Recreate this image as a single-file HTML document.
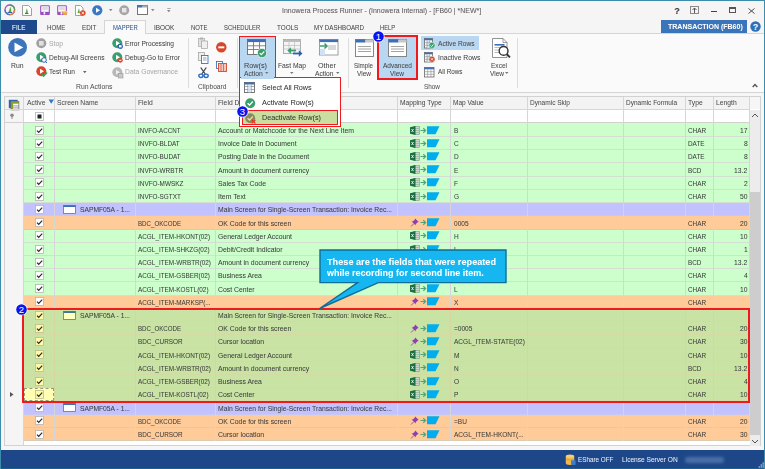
<!DOCTYPE html>
<html><head><meta charset="utf-8"><style>
html,body{margin:0;padding:0;}
body{width:765px;height:469px;overflow:hidden;position:relative;background:#f5f5f5;font-family:'Liberation Sans', sans-serif;}
div{position:absolute;box-sizing:border-box;}
.t{position:absolute;white-space:pre;line-height:10px;height:10px;transform-origin:0 50%;-webkit-text-stroke:0.04px currentColor;}
svg{overflow:visible}
</style></head><body>
<div style="left:0px;top:0px;width:765px;height:20px;background:#f5f5f5"></div><span class="t" style="left:282.00px;top:5.50px;font-size:8px;color:#555;transform:scaleX(0.870);">Innowera Process Runner - (Innowera Internal) - [FB60 | *NEW*]</span><span class="t" style="left:674.15px;top:5.52px;font-size:9px;color:#333;font-weight:bold;">?</span><div style="left:690px;top:6px;width:9px;height:8px;border:1px solid #8a8a8a"></div><svg style="position:absolute;left:690px;top:6px" width="9" height="8" viewBox="0 0 9 8"><path d="M4.5 2 L2.5 4 M4.5 2 L6.5 4 M4.5 2 V7" stroke="#555" stroke-width="1" fill="none"/></svg><div style="left:711px;top:10.6px;width:5.6px;height:1px;background:#444"></div><div style="left:729.3px;top:7px;width:6.8px;height:6px;border:1px solid #555;border-top-width:2px"></div><svg style="position:absolute;left:748px;top:8px" width="7" height="6" viewBox="0 0 7 6"><path d="M0.5 0.5 L6.5 5.5 M6.5 0.5 L0.5 5.5" stroke="#444" stroke-width="0.95"/></svg><div style="left:1px;top:33px;width:763px;height:1px;background:#d5d5d5"></div><div style="left:1px;top:20px;width:36px;height:14px;background:#1e4a8c"></div><span class="t" style="left:11.75px;top:22.50px;font-size:8px;color:#fff;transform:scaleX(0.799);">FILE</span><div style="left:104px;top:20px;width:42px;height:14px;background:#fafafa;border:1px solid #d5d5d5;border-bottom:none"></div><span class="t" style="left:46.70px;top:22.90px;font-size:8px;color:#444;transform:scaleX(0.762);">HOME</span><span class="t" style="left:81.60px;top:22.90px;font-size:8px;color:#444;transform:scaleX(0.790);">EDIT</span><span class="t" style="left:112.70px;top:22.90px;font-size:8px;color:#2b5797;transform:scaleX(0.731);">MAPPER</span><span class="t" style="left:154.00px;top:22.90px;font-size:8px;color:#444;transform:scaleX(0.805);">IBOOK</span><span class="t" style="left:191.00px;top:22.90px;font-size:8px;color:#444;transform:scaleX(0.738);">NOTE</span><span class="t" style="left:224.00px;top:22.90px;font-size:8px;color:#444;transform:scaleX(0.734);">SCHEDULER</span><span class="t" style="left:276.70px;top:22.90px;font-size:8px;color:#444;transform:scaleX(0.789);">TOOLS</span><span class="t" style="left:313.70px;top:22.90px;font-size:8px;color:#444;transform:scaleX(0.772);">MY DASHBOARD</span><span class="t" style="left:380.20px;top:22.90px;font-size:8px;color:#444;transform:scaleX(0.717);">HELP</span><div style="left:661px;top:20px;width:86px;height:13px;background:#3a74ba"></div><span class="t" style="left:668.20px;top:22.00px;font-size:8px;color:#fff;font-weight:bold;transform:scaleX(0.876);">TRANSACTION (FB60)</span><svg style="position:absolute;left:750px;top:21px" width="11" height="11" viewBox="0 0 11 11"><circle cx="5.5" cy="5.5" r="5.2" fill="#2e6fb7"/><text x="5.5" y="9" font-family="Liberation Sans" font-weight="bold" font-size="9" fill="#fff" text-anchor="middle">?</text></svg><div style="left:1px;top:34px;width:763px;height:58px;background:#fafafa"></div><div style="left:1px;top:92px;width:763px;height:1px;background:#d5d5d5"></div><div style="left:1px;top:93px;width:763px;height:357px;background:#f6f6f6"></div><div style="left:0px;top:450px;width:765px;height:19px;background:#1d4788"></div><div style="left:0px;top:468px;width:765px;height:1px;background:#1f5f8f"></div><div style="left:0px;top:0px;width:765px;height:1px;background:#3d8ca9"></div><div style="left:0px;top:0px;width:1px;height:469px;background:#3d8ca9"></div><div style="left:764px;top:0px;width:1px;height:469px;background:#3d8ca9"></div><div style="left:4px;top:96px;width:757px;height:350px;background:#fff;border:1px solid #d2d2d2"></div><div style="left:5px;top:97px;width:744px;height:12px;background:#f3f3f3"></div><div style="left:5px;top:109px;width:744px;height:1px;background:#d6d6d6"></div><div style="left:5px;top:110px;width:744px;height:12px;background:#fff"></div><div style="left:5px;top:122px;width:744px;height:1.3px;background:#d0d0d0"></div><div style="left:5px;top:97px;width:18px;height:348px;background:#f5f5f5"></div><div style="left:5px;top:97px;width:18px;height:12px;background:#f3f3f3"></div><div style="left:24px;top:123.3px;width:725px;height:13.235px;background:#ccffcc"></div><svg style="position:absolute;left:35px;top:125.6075px" width="9" height="9" viewBox="0 0 9 9"><rect x="0.5" y="0.5" width="8" height="8" fill="#fff" stroke="#b5b5b5" stroke-width="0.8"/><path d="M2 4.6 L3.7 6.4 L7.2 2.6" stroke="#2a2a2a" stroke-width="1.2" fill="none"/></svg><span class="t" style="left:138.20px;top:126.01px;font-size:8px;color:#3c3c3c;transform:scaleX(0.776);">INVFO-ACCNT</span><span class="t" style="left:218.20px;top:126.01px;font-size:8px;color:#3c3c3c;transform:scaleX(0.859);">Account or Matchcode for the Next Line Item</span><svg style="position:absolute;left:409.5px;top:125.6075px" width="31" height="9" viewBox="0 0 31 9">
<rect x="4" y="0.5" width="5.5" height="8" fill="#cfd8cf" stroke="#6d9a7a" stroke-width="0.6"/>
<path d="M5 2.5h4M5 4.5h4M5 6.5h4" stroke="#8ab596" stroke-width="0.7"/>
<path d="M0 1.2 L5.5 0 V9 L0 7.8 Z" fill="#1d7044"/>
<path d="M1.5 3 L3.5 6 M3.5 3 L1.5 6" stroke="#fff" stroke-width="0.8"/>
<path d="M10.5 4.5 H15.5 M13.3 2.3 L15.6 4.5 L13.3 6.7" stroke="#4aa57a" stroke-width="1.2" fill="none"/>
<path d="M17 0.3 H29.5 L25.5 8.3 H17 Z" fill="#00adef"/></svg><span class="t" style="left:453.50px;top:126.01px;font-size:8px;color:#3c3c3c;transform:scaleX(0.816);">B</span><span class="t" style="left:688.40px;top:126.01px;font-size:8px;color:#3c3c3c;transform:scaleX(0.797);">CHAR</span><span class="t" style="left:739.79px;top:126.01px;font-size:8px;color:#3c3c3c;transform:scaleX(0.844);">17</span><div style="left:24px;top:136.51px;width:725px;height:13.235px;background:#ccffcc"></div><svg style="position:absolute;left:35px;top:138.82249999999996px" width="9" height="9" viewBox="0 0 9 9"><rect x="0.5" y="0.5" width="8" height="8" fill="#fff" stroke="#b5b5b5" stroke-width="0.8"/><path d="M2 4.6 L3.7 6.4 L7.2 2.6" stroke="#2a2a2a" stroke-width="1.2" fill="none"/></svg><span class="t" style="left:138.20px;top:139.22px;font-size:8px;color:#3c3c3c;transform:scaleX(0.797);">INVFO-BLDAT</span><span class="t" style="left:218.20px;top:139.22px;font-size:8px;color:#3c3c3c;transform:scaleX(0.858);">Invoice Date in Document</span><svg style="position:absolute;left:409.5px;top:138.82249999999996px" width="31" height="9" viewBox="0 0 31 9">
<rect x="4" y="0.5" width="5.5" height="8" fill="#cfd8cf" stroke="#6d9a7a" stroke-width="0.6"/>
<path d="M5 2.5h4M5 4.5h4M5 6.5h4" stroke="#8ab596" stroke-width="0.7"/>
<path d="M0 1.2 L5.5 0 V9 L0 7.8 Z" fill="#1d7044"/>
<path d="M1.5 3 L3.5 6 M3.5 3 L1.5 6" stroke="#fff" stroke-width="0.8"/>
<path d="M10.5 4.5 H15.5 M13.3 2.3 L15.6 4.5 L13.3 6.7" stroke="#4aa57a" stroke-width="1.2" fill="none"/>
<path d="M17 0.3 H29.5 L25.5 8.3 H17 Z" fill="#00adef"/></svg><span class="t" style="left:453.50px;top:139.22px;font-size:8px;color:#3c3c3c;transform:scaleX(0.816);">C</span><span class="t" style="left:688.40px;top:139.22px;font-size:8px;color:#3c3c3c;transform:scaleX(0.797);">DATE</span><span class="t" style="left:743.54px;top:139.22px;font-size:8px;color:#3c3c3c;transform:scaleX(0.844);">8</span><div style="left:24px;top:149.73px;width:725px;height:13.235px;background:#ccffcc"></div><svg style="position:absolute;left:35px;top:152.03749999999997px" width="9" height="9" viewBox="0 0 9 9"><rect x="0.5" y="0.5" width="8" height="8" fill="#fff" stroke="#b5b5b5" stroke-width="0.8"/><path d="M2 4.6 L3.7 6.4 L7.2 2.6" stroke="#2a2a2a" stroke-width="1.2" fill="none"/></svg><span class="t" style="left:138.20px;top:152.44px;font-size:8px;color:#3c3c3c;transform:scaleX(0.797);">INVFO-BUDAT</span><span class="t" style="left:218.20px;top:152.44px;font-size:8px;color:#3c3c3c;transform:scaleX(0.858);">Posting Date in the Document</span><svg style="position:absolute;left:409.5px;top:152.03749999999997px" width="31" height="9" viewBox="0 0 31 9">
<rect x="4" y="0.5" width="5.5" height="8" fill="#cfd8cf" stroke="#6d9a7a" stroke-width="0.6"/>
<path d="M5 2.5h4M5 4.5h4M5 6.5h4" stroke="#8ab596" stroke-width="0.7"/>
<path d="M0 1.2 L5.5 0 V9 L0 7.8 Z" fill="#1d7044"/>
<path d="M1.5 3 L3.5 6 M3.5 3 L1.5 6" stroke="#fff" stroke-width="0.8"/>
<path d="M10.5 4.5 H15.5 M13.3 2.3 L15.6 4.5 L13.3 6.7" stroke="#4aa57a" stroke-width="1.2" fill="none"/>
<path d="M17 0.3 H29.5 L25.5 8.3 H17 Z" fill="#00adef"/></svg><span class="t" style="left:453.50px;top:152.44px;font-size:8px;color:#3c3c3c;transform:scaleX(0.816);">D</span><span class="t" style="left:688.40px;top:152.44px;font-size:8px;color:#3c3c3c;transform:scaleX(0.797);">DATE</span><span class="t" style="left:743.54px;top:152.44px;font-size:8px;color:#3c3c3c;transform:scaleX(0.844);">8</span><div style="left:24px;top:162.94px;width:725px;height:13.235px;background:#ccffcc"></div><svg style="position:absolute;left:35px;top:165.25249999999997px" width="9" height="9" viewBox="0 0 9 9"><rect x="0.5" y="0.5" width="8" height="8" fill="#fff" stroke="#b5b5b5" stroke-width="0.8"/><path d="M2 4.6 L3.7 6.4 L7.2 2.6" stroke="#2a2a2a" stroke-width="1.2" fill="none"/></svg><span class="t" style="left:138.20px;top:165.65px;font-size:8px;color:#3c3c3c;transform:scaleX(0.797);">INVFO-WRBTR</span><span class="t" style="left:218.20px;top:165.65px;font-size:8px;color:#3c3c3c;transform:scaleX(0.858);">Amount in document currency</span><svg style="position:absolute;left:409.5px;top:165.25249999999997px" width="31" height="9" viewBox="0 0 31 9">
<rect x="4" y="0.5" width="5.5" height="8" fill="#cfd8cf" stroke="#6d9a7a" stroke-width="0.6"/>
<path d="M5 2.5h4M5 4.5h4M5 6.5h4" stroke="#8ab596" stroke-width="0.7"/>
<path d="M0 1.2 L5.5 0 V9 L0 7.8 Z" fill="#1d7044"/>
<path d="M1.5 3 L3.5 6 M3.5 3 L1.5 6" stroke="#fff" stroke-width="0.8"/>
<path d="M10.5 4.5 H15.5 M13.3 2.3 L15.6 4.5 L13.3 6.7" stroke="#4aa57a" stroke-width="1.2" fill="none"/>
<path d="M17 0.3 H29.5 L25.5 8.3 H17 Z" fill="#00adef"/></svg><span class="t" style="left:453.50px;top:165.65px;font-size:8px;color:#3c3c3c;transform:scaleX(0.816);">E</span><span class="t" style="left:688.40px;top:165.65px;font-size:8px;color:#3c3c3c;transform:scaleX(0.797);">BCD</span><span class="t" style="left:734.16px;top:165.65px;font-size:8px;color:#3c3c3c;transform:scaleX(0.844);">13.2</span><div style="left:24px;top:176.16px;width:725px;height:13.235px;background:#ccffcc"></div><svg style="position:absolute;left:35px;top:178.46749999999997px" width="9" height="9" viewBox="0 0 9 9"><rect x="0.5" y="0.5" width="8" height="8" fill="#fff" stroke="#b5b5b5" stroke-width="0.8"/><path d="M2 4.6 L3.7 6.4 L7.2 2.6" stroke="#2a2a2a" stroke-width="1.2" fill="none"/></svg><span class="t" style="left:138.20px;top:178.87px;font-size:8px;color:#3c3c3c;transform:scaleX(0.797);">INVFO-MWSKZ</span><span class="t" style="left:218.20px;top:178.87px;font-size:8px;color:#3c3c3c;transform:scaleX(0.858);">Sales Tax Code</span><svg style="position:absolute;left:409.5px;top:178.46749999999997px" width="31" height="9" viewBox="0 0 31 9">
<rect x="4" y="0.5" width="5.5" height="8" fill="#cfd8cf" stroke="#6d9a7a" stroke-width="0.6"/>
<path d="M5 2.5h4M5 4.5h4M5 6.5h4" stroke="#8ab596" stroke-width="0.7"/>
<path d="M0 1.2 L5.5 0 V9 L0 7.8 Z" fill="#1d7044"/>
<path d="M1.5 3 L3.5 6 M3.5 3 L1.5 6" stroke="#fff" stroke-width="0.8"/>
<path d="M10.5 4.5 H15.5 M13.3 2.3 L15.6 4.5 L13.3 6.7" stroke="#4aa57a" stroke-width="1.2" fill="none"/>
<path d="M17 0.3 H29.5 L25.5 8.3 H17 Z" fill="#00adef"/></svg><span class="t" style="left:453.50px;top:178.87px;font-size:8px;color:#3c3c3c;transform:scaleX(0.816);">F</span><span class="t" style="left:688.40px;top:178.87px;font-size:8px;color:#3c3c3c;transform:scaleX(0.797);">CHAR</span><span class="t" style="left:743.54px;top:178.87px;font-size:8px;color:#3c3c3c;transform:scaleX(0.844);">2</span><div style="left:24px;top:189.38px;width:725px;height:13.235px;background:#ccffcc"></div><svg style="position:absolute;left:35px;top:191.68249999999998px" width="9" height="9" viewBox="0 0 9 9"><rect x="0.5" y="0.5" width="8" height="8" fill="#fff" stroke="#b5b5b5" stroke-width="0.8"/><path d="M2 4.6 L3.7 6.4 L7.2 2.6" stroke="#2a2a2a" stroke-width="1.2" fill="none"/></svg><span class="t" style="left:138.20px;top:192.08px;font-size:8px;color:#3c3c3c;transform:scaleX(0.797);">INVFO-SGTXT</span><span class="t" style="left:218.20px;top:192.08px;font-size:8px;color:#3c3c3c;transform:scaleX(0.858);">Item Text</span><svg style="position:absolute;left:409.5px;top:191.68249999999998px" width="31" height="9" viewBox="0 0 31 9">
<rect x="4" y="0.5" width="5.5" height="8" fill="#cfd8cf" stroke="#6d9a7a" stroke-width="0.6"/>
<path d="M5 2.5h4M5 4.5h4M5 6.5h4" stroke="#8ab596" stroke-width="0.7"/>
<path d="M0 1.2 L5.5 0 V9 L0 7.8 Z" fill="#1d7044"/>
<path d="M1.5 3 L3.5 6 M3.5 3 L1.5 6" stroke="#fff" stroke-width="0.8"/>
<path d="M10.5 4.5 H15.5 M13.3 2.3 L15.6 4.5 L13.3 6.7" stroke="#4aa57a" stroke-width="1.2" fill="none"/>
<path d="M17 0.3 H29.5 L25.5 8.3 H17 Z" fill="#00adef"/></svg><span class="t" style="left:453.50px;top:192.08px;font-size:8px;color:#3c3c3c;transform:scaleX(0.816);">G</span><span class="t" style="left:688.40px;top:192.08px;font-size:8px;color:#3c3c3c;transform:scaleX(0.797);">CHAR</span><span class="t" style="left:739.79px;top:192.08px;font-size:8px;color:#3c3c3c;transform:scaleX(0.844);">50</span><div style="left:24px;top:202.59px;width:725px;height:13.235px;background:#c2c2fe"></div><svg style="position:absolute;left:35px;top:204.89749999999995px" width="9" height="9" viewBox="0 0 9 9"><rect x="0.5" y="0.5" width="8" height="8" fill="#fff" stroke="#b5b5b5" stroke-width="0.8"/><path d="M2 4.6 L3.7 6.4 L7.2 2.6" stroke="#2a2a2a" stroke-width="1.2" fill="none"/></svg><svg style="position:absolute;left:63px;top:204.89749999999995px" width="13" height="9" viewBox="0 0 13 9"><rect x="0.5" y="0.5" width="12" height="8" fill="#fff" stroke="#7a7f88" stroke-width="0.9"/><rect x="0.5" y="0.3" width="12" height="1.7" fill="#3d6fb5"/></svg><span class="t" style="left:80.00px;top:205.30px;font-size:8px;color:#3c3c3c;transform:scaleX(0.839);">SAPMF05A - 1...</span><span class="t" style="left:218.20px;top:205.30px;font-size:8px;color:#3c3c3c;transform:scaleX(0.847);">Main Screen for Single-Screen Transaction: Invoice Rec...</span><div style="left:24px;top:215.81px;width:725px;height:13.235px;background:#ffcb98"></div><svg style="position:absolute;left:35px;top:218.11249999999998px" width="9" height="9" viewBox="0 0 9 9"><rect x="0.5" y="0.5" width="8" height="8" fill="#fff" stroke="#b5b5b5" stroke-width="0.8"/><path d="M2 4.6 L3.7 6.4 L7.2 2.6" stroke="#2a2a2a" stroke-width="1.2" fill="none"/></svg><span class="t" style="left:138.20px;top:218.51px;font-size:8px;color:#3c3c3c;transform:scaleX(0.768);">BDC_OKCODE</span><span class="t" style="left:218.20px;top:218.51px;font-size:8px;color:#3c3c3c;transform:scaleX(0.858);">OK Code for this screen</span><svg style="position:absolute;left:409.5px;top:218.11249999999998px" width="31" height="9" viewBox="0 0 31 9">
<path d="M1 8.5 L4 5.5" stroke="#6b4a8a" stroke-width="0.8"/>
<path d="M5.2 0.5 L8.7 4 L7.2 4.6 L5.6 6.6 L5.8 7.6 L1.6 3.4 L2.6 3.6 L4.6 2 Z" fill="#8e3fb0"/>
<path d="M10.5 4.5 H15.5 M13.3 2.3 L15.6 4.5 L13.3 6.7" stroke="#4aa57a" stroke-width="1.2" fill="none"/>
<path d="M17 0.3 H29.5 L25.5 8.3 H17 Z" fill="#00adef"/></svg><span class="t" style="left:453.50px;top:218.51px;font-size:8px;color:#3c3c3c;transform:scaleX(0.816);">0005</span><span class="t" style="left:688.40px;top:218.51px;font-size:8px;color:#3c3c3c;transform:scaleX(0.797);">CHAR</span><span class="t" style="left:739.79px;top:218.51px;font-size:8px;color:#3c3c3c;transform:scaleX(0.844);">20</span><div style="left:24px;top:229.02px;width:725px;height:13.235px;background:#ccffcc"></div><svg style="position:absolute;left:35px;top:231.32749999999996px" width="9" height="9" viewBox="0 0 9 9"><rect x="0.5" y="0.5" width="8" height="8" fill="#fff" stroke="#b5b5b5" stroke-width="0.8"/><path d="M2 4.6 L3.7 6.4 L7.2 2.6" stroke="#2a2a2a" stroke-width="1.2" fill="none"/></svg><span class="t" style="left:138.20px;top:231.73px;font-size:8px;color:#3c3c3c;transform:scaleX(0.798);">ACGL_ITEM-HKONT(02)</span><span class="t" style="left:218.20px;top:231.73px;font-size:8px;color:#3c3c3c;transform:scaleX(0.858);">General Ledger Account</span><svg style="position:absolute;left:409.5px;top:231.32749999999996px" width="31" height="9" viewBox="0 0 31 9">
<rect x="4" y="0.5" width="5.5" height="8" fill="#cfd8cf" stroke="#6d9a7a" stroke-width="0.6"/>
<path d="M5 2.5h4M5 4.5h4M5 6.5h4" stroke="#8ab596" stroke-width="0.7"/>
<path d="M0 1.2 L5.5 0 V9 L0 7.8 Z" fill="#1d7044"/>
<path d="M1.5 3 L3.5 6 M3.5 3 L1.5 6" stroke="#fff" stroke-width="0.8"/>
<path d="M10.5 4.5 H15.5 M13.3 2.3 L15.6 4.5 L13.3 6.7" stroke="#4aa57a" stroke-width="1.2" fill="none"/>
<path d="M17 0.3 H29.5 L25.5 8.3 H17 Z" fill="#00adef"/></svg><span class="t" style="left:453.50px;top:231.73px;font-size:8px;color:#3c3c3c;transform:scaleX(0.816);">H</span><span class="t" style="left:688.40px;top:231.73px;font-size:8px;color:#3c3c3c;transform:scaleX(0.797);">CHAR</span><span class="t" style="left:739.79px;top:231.73px;font-size:8px;color:#3c3c3c;transform:scaleX(0.844);">10</span><div style="left:24px;top:242.24px;width:725px;height:13.235px;background:#ccffcc"></div><svg style="position:absolute;left:35px;top:244.5425px" width="9" height="9" viewBox="0 0 9 9"><rect x="0.5" y="0.5" width="8" height="8" fill="#fff" stroke="#b5b5b5" stroke-width="0.8"/><path d="M2 4.6 L3.7 6.4 L7.2 2.6" stroke="#2a2a2a" stroke-width="1.2" fill="none"/></svg><span class="t" style="left:138.20px;top:244.94px;font-size:8px;color:#3c3c3c;transform:scaleX(0.797);">ACGL_ITEM-SHKZG(02)</span><span class="t" style="left:218.20px;top:244.94px;font-size:8px;color:#3c3c3c;transform:scaleX(0.858);">Debit/Credit Indicator</span><svg style="position:absolute;left:409.5px;top:244.5425px" width="31" height="9" viewBox="0 0 31 9">
<rect x="4" y="0.5" width="5.5" height="8" fill="#cfd8cf" stroke="#6d9a7a" stroke-width="0.6"/>
<path d="M5 2.5h4M5 4.5h4M5 6.5h4" stroke="#8ab596" stroke-width="0.7"/>
<path d="M0 1.2 L5.5 0 V9 L0 7.8 Z" fill="#1d7044"/>
<path d="M1.5 3 L3.5 6 M3.5 3 L1.5 6" stroke="#fff" stroke-width="0.8"/>
<path d="M10.5 4.5 H15.5 M13.3 2.3 L15.6 4.5 L13.3 6.7" stroke="#4aa57a" stroke-width="1.2" fill="none"/>
<path d="M17 0.3 H29.5 L25.5 8.3 H17 Z" fill="#00adef"/></svg><span class="t" style="left:453.50px;top:244.94px;font-size:8px;color:#3c3c3c;transform:scaleX(0.816);">I</span><span class="t" style="left:688.40px;top:244.94px;font-size:8px;color:#3c3c3c;transform:scaleX(0.797);">CHAR</span><span class="t" style="left:743.54px;top:244.94px;font-size:8px;color:#3c3c3c;transform:scaleX(0.844);">1</span><div style="left:24px;top:255.45px;width:725px;height:13.235px;background:#ccffcc"></div><svg style="position:absolute;left:35px;top:257.7575px" width="9" height="9" viewBox="0 0 9 9"><rect x="0.5" y="0.5" width="8" height="8" fill="#fff" stroke="#b5b5b5" stroke-width="0.8"/><path d="M2 4.6 L3.7 6.4 L7.2 2.6" stroke="#2a2a2a" stroke-width="1.2" fill="none"/></svg><span class="t" style="left:138.20px;top:258.16px;font-size:8px;color:#3c3c3c;transform:scaleX(0.797);">ACGL_ITEM-WRBTR(02)</span><span class="t" style="left:218.20px;top:258.16px;font-size:8px;color:#3c3c3c;transform:scaleX(0.858);">Amount in document currency</span><svg style="position:absolute;left:409.5px;top:257.7575px" width="31" height="9" viewBox="0 0 31 9">
<rect x="4" y="0.5" width="5.5" height="8" fill="#cfd8cf" stroke="#6d9a7a" stroke-width="0.6"/>
<path d="M5 2.5h4M5 4.5h4M5 6.5h4" stroke="#8ab596" stroke-width="0.7"/>
<path d="M0 1.2 L5.5 0 V9 L0 7.8 Z" fill="#1d7044"/>
<path d="M1.5 3 L3.5 6 M3.5 3 L1.5 6" stroke="#fff" stroke-width="0.8"/>
<path d="M10.5 4.5 H15.5 M13.3 2.3 L15.6 4.5 L13.3 6.7" stroke="#4aa57a" stroke-width="1.2" fill="none"/>
<path d="M17 0.3 H29.5 L25.5 8.3 H17 Z" fill="#00adef"/></svg><span class="t" style="left:453.50px;top:258.16px;font-size:8px;color:#3c3c3c;transform:scaleX(0.816);">J</span><span class="t" style="left:688.40px;top:258.16px;font-size:8px;color:#3c3c3c;transform:scaleX(0.797);">BCD</span><span class="t" style="left:734.16px;top:258.16px;font-size:8px;color:#3c3c3c;transform:scaleX(0.844);">13.2</span><div style="left:24px;top:268.67px;width:725px;height:13.235px;background:#ccffcc"></div><svg style="position:absolute;left:35px;top:270.9725px" width="9" height="9" viewBox="0 0 9 9"><rect x="0.5" y="0.5" width="8" height="8" fill="#fff" stroke="#b5b5b5" stroke-width="0.8"/><path d="M2 4.6 L3.7 6.4 L7.2 2.6" stroke="#2a2a2a" stroke-width="1.2" fill="none"/></svg><span class="t" style="left:138.20px;top:271.37px;font-size:8px;color:#3c3c3c;transform:scaleX(0.797);">ACGL_ITEM-GSBER(02)</span><span class="t" style="left:218.20px;top:271.37px;font-size:8px;color:#3c3c3c;transform:scaleX(0.858);">Business Area</span><svg style="position:absolute;left:409.5px;top:270.9725px" width="31" height="9" viewBox="0 0 31 9">
<rect x="4" y="0.5" width="5.5" height="8" fill="#cfd8cf" stroke="#6d9a7a" stroke-width="0.6"/>
<path d="M5 2.5h4M5 4.5h4M5 6.5h4" stroke="#8ab596" stroke-width="0.7"/>
<path d="M0 1.2 L5.5 0 V9 L0 7.8 Z" fill="#1d7044"/>
<path d="M1.5 3 L3.5 6 M3.5 3 L1.5 6" stroke="#fff" stroke-width="0.8"/>
<path d="M10.5 4.5 H15.5 M13.3 2.3 L15.6 4.5 L13.3 6.7" stroke="#4aa57a" stroke-width="1.2" fill="none"/>
<path d="M17 0.3 H29.5 L25.5 8.3 H17 Z" fill="#00adef"/></svg><span class="t" style="left:453.50px;top:271.37px;font-size:8px;color:#3c3c3c;transform:scaleX(0.816);">K</span><span class="t" style="left:688.40px;top:271.37px;font-size:8px;color:#3c3c3c;transform:scaleX(0.797);">CHAR</span><span class="t" style="left:743.54px;top:271.37px;font-size:8px;color:#3c3c3c;transform:scaleX(0.844);">4</span><div style="left:24px;top:281.88px;width:725px;height:13.235px;background:#ccffcc"></div><svg style="position:absolute;left:35px;top:284.1875px" width="9" height="9" viewBox="0 0 9 9"><rect x="0.5" y="0.5" width="8" height="8" fill="#fff" stroke="#b5b5b5" stroke-width="0.8"/><path d="M2 4.6 L3.7 6.4 L7.2 2.6" stroke="#2a2a2a" stroke-width="1.2" fill="none"/></svg><span class="t" style="left:138.20px;top:284.59px;font-size:8px;color:#3c3c3c;transform:scaleX(0.797);">ACGL_ITEM-KOSTL(02)</span><span class="t" style="left:218.20px;top:284.59px;font-size:8px;color:#3c3c3c;transform:scaleX(0.858);">Cost Center</span><svg style="position:absolute;left:409.5px;top:284.1875px" width="31" height="9" viewBox="0 0 31 9">
<rect x="4" y="0.5" width="5.5" height="8" fill="#cfd8cf" stroke="#6d9a7a" stroke-width="0.6"/>
<path d="M5 2.5h4M5 4.5h4M5 6.5h4" stroke="#8ab596" stroke-width="0.7"/>
<path d="M0 1.2 L5.5 0 V9 L0 7.8 Z" fill="#1d7044"/>
<path d="M1.5 3 L3.5 6 M3.5 3 L1.5 6" stroke="#fff" stroke-width="0.8"/>
<path d="M10.5 4.5 H15.5 M13.3 2.3 L15.6 4.5 L13.3 6.7" stroke="#4aa57a" stroke-width="1.2" fill="none"/>
<path d="M17 0.3 H29.5 L25.5 8.3 H17 Z" fill="#00adef"/></svg><span class="t" style="left:453.50px;top:284.59px;font-size:8px;color:#3c3c3c;transform:scaleX(0.816);">L</span><span class="t" style="left:688.40px;top:284.59px;font-size:8px;color:#3c3c3c;transform:scaleX(0.797);">CHAR</span><span class="t" style="left:739.79px;top:284.59px;font-size:8px;color:#3c3c3c;transform:scaleX(0.844);">10</span><div style="left:24px;top:295.09px;width:725px;height:13.235px;background:#ffcb98"></div><svg style="position:absolute;left:35px;top:297.4025px" width="9" height="9" viewBox="0 0 9 9"><rect x="0.5" y="0.5" width="8" height="8" fill="#fff" stroke="#b5b5b5" stroke-width="0.8"/><path d="M2 4.6 L3.7 6.4 L7.2 2.6" stroke="#2a2a2a" stroke-width="1.2" fill="none"/></svg><span class="t" style="left:138.20px;top:297.80px;font-size:8px;color:#3c3c3c;transform:scaleX(0.797);">ACGL_ITEM-MARKSP(...</span><svg style="position:absolute;left:409.5px;top:297.4025px" width="31" height="9" viewBox="0 0 31 9">
<path d="M1 8.5 L4 5.5" stroke="#6b4a8a" stroke-width="0.8"/>
<path d="M5.2 0.5 L8.7 4 L7.2 4.6 L5.6 6.6 L5.8 7.6 L1.6 3.4 L2.6 3.6 L4.6 2 Z" fill="#8e3fb0"/>
<path d="M10.5 4.5 H15.5 M13.3 2.3 L15.6 4.5 L13.3 6.7" stroke="#4aa57a" stroke-width="1.2" fill="none"/>
<path d="M17 0.3 H29.5 L25.5 8.3 H17 Z" fill="#00adef"/></svg><span class="t" style="left:453.50px;top:297.80px;font-size:8px;color:#3c3c3c;transform:scaleX(0.816);">X</span><span class="t" style="left:688.40px;top:297.80px;font-size:8px;color:#3c3c3c;transform:scaleX(0.797);">CHAR</span><div style="left:24px;top:308.31px;width:725px;height:13.235px;background:#c9e3a5"></div><svg style="position:absolute;left:35px;top:310.6175px" width="9" height="9" viewBox="0 0 9 9"><rect x="0.5" y="0.5" width="8" height="8" fill="#fff9aa" stroke="#bdbb8e" stroke-width="0.8"/><path d="M2 4.6 L3.7 6.4 L7.2 2.6" stroke="#2a2a2a" stroke-width="1.2" fill="none"/></svg><svg style="position:absolute;left:63px;top:310.6175px" width="13" height="9" viewBox="0 0 13 9"><rect x="0.5" y="0.5" width="12" height="8" fill="#ffffc0" stroke="#7a7f88" stroke-width="0.9"/><rect x="0.5" y="0.3" width="12" height="1.7" fill="#3a7a8a"/></svg><span class="t" style="left:80.00px;top:311.02px;font-size:8px;color:#3c3c3c;transform:scaleX(0.839);">SAPMF05A - 1...</span><span class="t" style="left:218.20px;top:311.02px;font-size:8px;color:#3c3c3c;transform:scaleX(0.847);">Main Screen for Single-Screen Transaction: Invoice Rec...</span><div style="left:24px;top:321.52px;width:725px;height:13.235px;background:#c9e3a5"></div><svg style="position:absolute;left:35px;top:323.8325px" width="9" height="9" viewBox="0 0 9 9"><rect x="0.5" y="0.5" width="8" height="8" fill="#fff9aa" stroke="#bdbb8e" stroke-width="0.8"/><path d="M2 4.6 L3.7 6.4 L7.2 2.6" stroke="#2a2a2a" stroke-width="1.2" fill="none"/></svg><span class="t" style="left:138.20px;top:324.23px;font-size:8px;color:#3c3c3c;transform:scaleX(0.768);">BDC_OKCODE</span><span class="t" style="left:218.20px;top:324.23px;font-size:8px;color:#3c3c3c;transform:scaleX(0.858);">OK Code for this screen</span><svg style="position:absolute;left:409.5px;top:323.8325px" width="31" height="9" viewBox="0 0 31 9">
<path d="M1 8.5 L4 5.5" stroke="#6b4a8a" stroke-width="0.8"/>
<path d="M5.2 0.5 L8.7 4 L7.2 4.6 L5.6 6.6 L5.8 7.6 L1.6 3.4 L2.6 3.6 L4.6 2 Z" fill="#8e3fb0"/>
<path d="M10.5 4.5 H15.5 M13.3 2.3 L15.6 4.5 L13.3 6.7" stroke="#4aa57a" stroke-width="1.2" fill="none"/>
<path d="M17 0.3 H29.5 L25.5 8.3 H17 Z" fill="#00adef"/></svg><span class="t" style="left:453.50px;top:324.23px;font-size:8px;color:#3c3c3c;transform:scaleX(0.816);">=0005</span><span class="t" style="left:688.40px;top:324.23px;font-size:8px;color:#3c3c3c;transform:scaleX(0.797);">CHAR</span><span class="t" style="left:739.79px;top:324.23px;font-size:8px;color:#3c3c3c;transform:scaleX(0.844);">20</span><div style="left:24px;top:334.74px;width:725px;height:13.235px;background:#c9e3a5"></div><svg style="position:absolute;left:35px;top:337.0475px" width="9" height="9" viewBox="0 0 9 9"><rect x="0.5" y="0.5" width="8" height="8" fill="#fff9aa" stroke="#bdbb8e" stroke-width="0.8"/><path d="M2 4.6 L3.7 6.4 L7.2 2.6" stroke="#2a2a2a" stroke-width="1.2" fill="none"/></svg><span class="t" style="left:138.20px;top:337.45px;font-size:8px;color:#3c3c3c;transform:scaleX(0.797);">BDC_CURSOR</span><span class="t" style="left:218.20px;top:337.45px;font-size:8px;color:#3c3c3c;transform:scaleX(0.858);">Cursor location</span><svg style="position:absolute;left:409.5px;top:337.0475px" width="31" height="9" viewBox="0 0 31 9">
<path d="M1 8.5 L4 5.5" stroke="#6b4a8a" stroke-width="0.8"/>
<path d="M5.2 0.5 L8.7 4 L7.2 4.6 L5.6 6.6 L5.8 7.6 L1.6 3.4 L2.6 3.6 L4.6 2 Z" fill="#8e3fb0"/>
<path d="M10.5 4.5 H15.5 M13.3 2.3 L15.6 4.5 L13.3 6.7" stroke="#4aa57a" stroke-width="1.2" fill="none"/>
<path d="M17 0.3 H29.5 L25.5 8.3 H17 Z" fill="#00adef"/></svg><span class="t" style="left:453.50px;top:337.45px;font-size:8px;color:#3c3c3c;transform:scaleX(0.816);">ACGL_ITEM-STATE(02)</span><span class="t" style="left:688.40px;top:337.45px;font-size:8px;color:#3c3c3c;transform:scaleX(0.797);">CHAR</span><span class="t" style="left:739.79px;top:337.45px;font-size:8px;color:#3c3c3c;transform:scaleX(0.844);">30</span><div style="left:24px;top:347.95px;width:725px;height:13.235px;background:#c9e3a5"></div><svg style="position:absolute;left:35px;top:350.2625px" width="9" height="9" viewBox="0 0 9 9"><rect x="0.5" y="0.5" width="8" height="8" fill="#fff9aa" stroke="#bdbb8e" stroke-width="0.8"/><path d="M2 4.6 L3.7 6.4 L7.2 2.6" stroke="#2a2a2a" stroke-width="1.2" fill="none"/></svg><span class="t" style="left:138.20px;top:350.66px;font-size:8px;color:#3c3c3c;transform:scaleX(0.798);">ACGL_ITEM-HKONT(02)</span><span class="t" style="left:218.20px;top:350.66px;font-size:8px;color:#3c3c3c;transform:scaleX(0.858);">General Ledger Account</span><svg style="position:absolute;left:409.5px;top:350.2625px" width="31" height="9" viewBox="0 0 31 9">
<rect x="4" y="0.5" width="5.5" height="8" fill="#cfd8cf" stroke="#6d9a7a" stroke-width="0.6"/>
<path d="M5 2.5h4M5 4.5h4M5 6.5h4" stroke="#8ab596" stroke-width="0.7"/>
<path d="M0 1.2 L5.5 0 V9 L0 7.8 Z" fill="#1d7044"/>
<path d="M1.5 3 L3.5 6 M3.5 3 L1.5 6" stroke="#fff" stroke-width="0.8"/>
<path d="M10.5 4.5 H15.5 M13.3 2.3 L15.6 4.5 L13.3 6.7" stroke="#4aa57a" stroke-width="1.2" fill="none"/>
<path d="M17 0.3 H29.5 L25.5 8.3 H17 Z" fill="#00adef"/></svg><span class="t" style="left:453.50px;top:350.66px;font-size:8px;color:#3c3c3c;transform:scaleX(0.816);">M</span><span class="t" style="left:688.40px;top:350.66px;font-size:8px;color:#3c3c3c;transform:scaleX(0.797);">CHAR</span><span class="t" style="left:739.79px;top:350.66px;font-size:8px;color:#3c3c3c;transform:scaleX(0.844);">10</span><div style="left:24px;top:361.17px;width:725px;height:13.235px;background:#c9e3a5"></div><svg style="position:absolute;left:35px;top:363.4775px" width="9" height="9" viewBox="0 0 9 9"><rect x="0.5" y="0.5" width="8" height="8" fill="#fff9aa" stroke="#bdbb8e" stroke-width="0.8"/><path d="M2 4.6 L3.7 6.4 L7.2 2.6" stroke="#2a2a2a" stroke-width="1.2" fill="none"/></svg><span class="t" style="left:138.20px;top:363.88px;font-size:8px;color:#3c3c3c;transform:scaleX(0.797);">ACGL_ITEM-WRBTR(02)</span><span class="t" style="left:218.20px;top:363.88px;font-size:8px;color:#3c3c3c;transform:scaleX(0.858);">Amount in document currency</span><svg style="position:absolute;left:409.5px;top:363.4775px" width="31" height="9" viewBox="0 0 31 9">
<rect x="4" y="0.5" width="5.5" height="8" fill="#cfd8cf" stroke="#6d9a7a" stroke-width="0.6"/>
<path d="M5 2.5h4M5 4.5h4M5 6.5h4" stroke="#8ab596" stroke-width="0.7"/>
<path d="M0 1.2 L5.5 0 V9 L0 7.8 Z" fill="#1d7044"/>
<path d="M1.5 3 L3.5 6 M3.5 3 L1.5 6" stroke="#fff" stroke-width="0.8"/>
<path d="M10.5 4.5 H15.5 M13.3 2.3 L15.6 4.5 L13.3 6.7" stroke="#4aa57a" stroke-width="1.2" fill="none"/>
<path d="M17 0.3 H29.5 L25.5 8.3 H17 Z" fill="#00adef"/></svg><span class="t" style="left:453.50px;top:363.88px;font-size:8px;color:#3c3c3c;transform:scaleX(0.816);">N</span><span class="t" style="left:688.40px;top:363.88px;font-size:8px;color:#3c3c3c;transform:scaleX(0.797);">BCD</span><span class="t" style="left:734.16px;top:363.88px;font-size:8px;color:#3c3c3c;transform:scaleX(0.844);">13.2</span><div style="left:24px;top:374.38px;width:725px;height:13.235px;background:#c9e3a5"></div><svg style="position:absolute;left:35px;top:376.6925px" width="9" height="9" viewBox="0 0 9 9"><rect x="0.5" y="0.5" width="8" height="8" fill="#fff9aa" stroke="#bdbb8e" stroke-width="0.8"/><path d="M2 4.6 L3.7 6.4 L7.2 2.6" stroke="#2a2a2a" stroke-width="1.2" fill="none"/></svg><span class="t" style="left:138.20px;top:377.09px;font-size:8px;color:#3c3c3c;transform:scaleX(0.797);">ACGL_ITEM-GSBER(02)</span><span class="t" style="left:218.20px;top:377.09px;font-size:8px;color:#3c3c3c;transform:scaleX(0.858);">Business Area</span><svg style="position:absolute;left:409.5px;top:376.6925px" width="31" height="9" viewBox="0 0 31 9">
<rect x="4" y="0.5" width="5.5" height="8" fill="#cfd8cf" stroke="#6d9a7a" stroke-width="0.6"/>
<path d="M5 2.5h4M5 4.5h4M5 6.5h4" stroke="#8ab596" stroke-width="0.7"/>
<path d="M0 1.2 L5.5 0 V9 L0 7.8 Z" fill="#1d7044"/>
<path d="M1.5 3 L3.5 6 M3.5 3 L1.5 6" stroke="#fff" stroke-width="0.8"/>
<path d="M10.5 4.5 H15.5 M13.3 2.3 L15.6 4.5 L13.3 6.7" stroke="#4aa57a" stroke-width="1.2" fill="none"/>
<path d="M17 0.3 H29.5 L25.5 8.3 H17 Z" fill="#00adef"/></svg><span class="t" style="left:453.50px;top:377.09px;font-size:8px;color:#3c3c3c;transform:scaleX(0.816);">O</span><span class="t" style="left:688.40px;top:377.09px;font-size:8px;color:#3c3c3c;transform:scaleX(0.797);">CHAR</span><span class="t" style="left:743.54px;top:377.09px;font-size:8px;color:#3c3c3c;transform:scaleX(0.844);">4</span><div style="left:24px;top:387.6px;width:725px;height:13.235px;background:#c9e3a5"></div><svg style="position:absolute;left:35px;top:389.9075px" width="9" height="9" viewBox="0 0 9 9"><rect x="0.5" y="0.5" width="8" height="8" fill="#fff9aa" stroke="#bdbb8e" stroke-width="0.8"/><path d="M2 4.6 L3.7 6.4 L7.2 2.6" stroke="#2a2a2a" stroke-width="1.2" fill="none"/></svg><span class="t" style="left:138.20px;top:390.31px;font-size:8px;color:#3c3c3c;transform:scaleX(0.797);">ACGL_ITEM-KOSTL(02)</span><span class="t" style="left:218.20px;top:390.31px;font-size:8px;color:#3c3c3c;transform:scaleX(0.858);">Cost Center</span><svg style="position:absolute;left:409.5px;top:389.9075px" width="31" height="9" viewBox="0 0 31 9">
<rect x="4" y="0.5" width="5.5" height="8" fill="#cfd8cf" stroke="#6d9a7a" stroke-width="0.6"/>
<path d="M5 2.5h4M5 4.5h4M5 6.5h4" stroke="#8ab596" stroke-width="0.7"/>
<path d="M0 1.2 L5.5 0 V9 L0 7.8 Z" fill="#1d7044"/>
<path d="M1.5 3 L3.5 6 M3.5 3 L1.5 6" stroke="#fff" stroke-width="0.8"/>
<path d="M10.5 4.5 H15.5 M13.3 2.3 L15.6 4.5 L13.3 6.7" stroke="#4aa57a" stroke-width="1.2" fill="none"/>
<path d="M17 0.3 H29.5 L25.5 8.3 H17 Z" fill="#00adef"/></svg><span class="t" style="left:453.50px;top:390.31px;font-size:8px;color:#3c3c3c;transform:scaleX(0.816);">P</span><span class="t" style="left:688.40px;top:390.31px;font-size:8px;color:#3c3c3c;transform:scaleX(0.797);">CHAR</span><span class="t" style="left:739.79px;top:390.31px;font-size:8px;color:#3c3c3c;transform:scaleX(0.844);">10</span><div style="left:24px;top:400.81px;width:725px;height:13.235px;background:#c2c2fe"></div><svg style="position:absolute;left:35px;top:403.1225px" width="9" height="9" viewBox="0 0 9 9"><rect x="0.5" y="0.5" width="8" height="8" fill="#fff" stroke="#b5b5b5" stroke-width="0.8"/><path d="M2 4.6 L3.7 6.4 L7.2 2.6" stroke="#2a2a2a" stroke-width="1.2" fill="none"/></svg><svg style="position:absolute;left:63px;top:403.1225px" width="13" height="9" viewBox="0 0 13 9"><rect x="0.5" y="0.5" width="12" height="8" fill="#fff" stroke="#7a7f88" stroke-width="0.9"/><rect x="0.5" y="0.3" width="12" height="1.7" fill="#3d6fb5"/></svg><span class="t" style="left:80.00px;top:403.52px;font-size:8px;color:#3c3c3c;transform:scaleX(0.839);">SAPMF05A - 1...</span><span class="t" style="left:218.20px;top:403.52px;font-size:8px;color:#3c3c3c;transform:scaleX(0.847);">Main Screen for Single-Screen Transaction: Invoice Rec...</span><div style="left:24px;top:414.03px;width:725px;height:13.235px;background:#ffcb98"></div><svg style="position:absolute;left:35px;top:416.33750000000003px" width="9" height="9" viewBox="0 0 9 9"><rect x="0.5" y="0.5" width="8" height="8" fill="#fff" stroke="#b5b5b5" stroke-width="0.8"/><path d="M2 4.6 L3.7 6.4 L7.2 2.6" stroke="#2a2a2a" stroke-width="1.2" fill="none"/></svg><span class="t" style="left:138.20px;top:416.74px;font-size:8px;color:#3c3c3c;transform:scaleX(0.768);">BDC_OKCODE</span><span class="t" style="left:218.20px;top:416.74px;font-size:8px;color:#3c3c3c;transform:scaleX(0.858);">OK Code for this screen</span><svg style="position:absolute;left:409.5px;top:416.33750000000003px" width="31" height="9" viewBox="0 0 31 9">
<path d="M1 8.5 L4 5.5" stroke="#6b4a8a" stroke-width="0.8"/>
<path d="M5.2 0.5 L8.7 4 L7.2 4.6 L5.6 6.6 L5.8 7.6 L1.6 3.4 L2.6 3.6 L4.6 2 Z" fill="#8e3fb0"/>
<path d="M10.5 4.5 H15.5 M13.3 2.3 L15.6 4.5 L13.3 6.7" stroke="#4aa57a" stroke-width="1.2" fill="none"/>
<path d="M17 0.3 H29.5 L25.5 8.3 H17 Z" fill="#00adef"/></svg><span class="t" style="left:453.50px;top:416.74px;font-size:8px;color:#3c3c3c;transform:scaleX(0.816);">=BU</span><span class="t" style="left:688.40px;top:416.74px;font-size:8px;color:#3c3c3c;transform:scaleX(0.797);">CHAR</span><span class="t" style="left:739.79px;top:416.74px;font-size:8px;color:#3c3c3c;transform:scaleX(0.844);">20</span><div style="left:24px;top:427.25px;width:725px;height:13.235px;background:#ffcb98"></div><svg style="position:absolute;left:35px;top:429.5525px" width="9" height="9" viewBox="0 0 9 9"><rect x="0.5" y="0.5" width="8" height="8" fill="#fff" stroke="#b5b5b5" stroke-width="0.8"/><path d="M2 4.6 L3.7 6.4 L7.2 2.6" stroke="#2a2a2a" stroke-width="1.2" fill="none"/></svg><span class="t" style="left:138.20px;top:429.95px;font-size:8px;color:#3c3c3c;transform:scaleX(0.797);">BDC_CURSOR</span><span class="t" style="left:218.20px;top:429.95px;font-size:8px;color:#3c3c3c;transform:scaleX(0.858);">Cursor location</span><svg style="position:absolute;left:409.5px;top:429.5525px" width="31" height="9" viewBox="0 0 31 9">
<path d="M1 8.5 L4 5.5" stroke="#6b4a8a" stroke-width="0.8"/>
<path d="M5.2 0.5 L8.7 4 L7.2 4.6 L5.6 6.6 L5.8 7.6 L1.6 3.4 L2.6 3.6 L4.6 2 Z" fill="#8e3fb0"/>
<path d="M10.5 4.5 H15.5 M13.3 2.3 L15.6 4.5 L13.3 6.7" stroke="#4aa57a" stroke-width="1.2" fill="none"/>
<path d="M17 0.3 H29.5 L25.5 8.3 H17 Z" fill="#00adef"/></svg><span class="t" style="left:453.50px;top:429.95px;font-size:8px;color:#3c3c3c;transform:scaleX(0.816);">ACGL_ITEM-HKONT(...</span><span class="t" style="left:688.40px;top:429.95px;font-size:8px;color:#3c3c3c;transform:scaleX(0.797);">CHAR</span><span class="t" style="left:739.79px;top:429.95px;font-size:8px;color:#3c3c3c;transform:scaleX(0.844);">30</span><div style="left:24px;top:136.01px;width:725px;height:1px;background:#d2dfd2"></div><div style="left:24px;top:149.23px;width:725px;height:1px;background:#d2dfd2"></div><div style="left:24px;top:162.44px;width:725px;height:1px;background:#d2dfd2"></div><div style="left:24px;top:175.66px;width:725px;height:1px;background:#d2dfd2"></div><div style="left:24px;top:188.88px;width:725px;height:1px;background:#d2dfd2"></div><div style="left:24px;top:202.09px;width:725px;height:1px;background:#d2dfd2"></div><div style="left:24px;top:215.3px;width:725px;height:1px;background:#c8c8f0"></div><div style="left:24px;top:228.52px;width:725px;height:1px;background:#dccab2"></div><div style="left:24px;top:241.73px;width:725px;height:1px;background:#d2dfd2"></div><div style="left:24px;top:254.95px;width:725px;height:1px;background:#d2dfd2"></div><div style="left:24px;top:268.16px;width:725px;height:1px;background:#d2dfd2"></div><div style="left:24px;top:281.38px;width:725px;height:1px;background:#d2dfd2"></div><div style="left:24px;top:294.59px;width:725px;height:1px;background:#d2dfd2"></div><div style="left:24px;top:307.81px;width:725px;height:1px;background:#dccab2"></div><div style="left:24px;top:321.02px;width:725px;height:1px;background:#d5daa4"></div><div style="left:24px;top:334.24px;width:725px;height:1px;background:#d5daa4"></div><div style="left:24px;top:347.45px;width:725px;height:1px;background:#d5daa4"></div><div style="left:24px;top:360.67px;width:725px;height:1px;background:#d5daa4"></div><div style="left:24px;top:373.88px;width:725px;height:1px;background:#d5daa4"></div><div style="left:24px;top:387.1px;width:725px;height:1px;background:#d5daa4"></div><div style="left:24px;top:400.31px;width:725px;height:1px;background:#d5daa4"></div><div style="left:24px;top:413.53px;width:725px;height:1px;background:#c8c8f0"></div><div style="left:24px;top:426.75px;width:725px;height:1px;background:#dccab2"></div><div style="left:24px;top:439.96px;width:725px;height:1px;background:#dccab2"></div><div style="left:23px;top:97px;width:1px;height:348px;background:#d6d6d6"></div><div style="left:54px;top:97px;width:1px;height:343.5px;background:#d6d6d6"></div><div style="left:54px;top:308.31px;width:1px;height:92.5px;background:#d6d6a0"></div><div style="left:135px;top:97px;width:1px;height:343.5px;background:#d6d6d6"></div><div style="left:135px;top:308.31px;width:1px;height:92.5px;background:#d6d6a0"></div><div style="left:215px;top:97px;width:1px;height:343.5px;background:#d6d6d6"></div><div style="left:215px;top:308.31px;width:1px;height:92.5px;background:#d6d6a0"></div><div style="left:397px;top:97px;width:1px;height:343.5px;background:#d6d6d6"></div><div style="left:397px;top:308.31px;width:1px;height:92.5px;background:#d6d6a0"></div><div style="left:450px;top:97px;width:1px;height:343.5px;background:#d6d6d6"></div><div style="left:450px;top:308.31px;width:1px;height:92.5px;background:#d6d6a0"></div><div style="left:527px;top:97px;width:1px;height:343.5px;background:#d6d6d6"></div><div style="left:527px;top:308.31px;width:1px;height:92.5px;background:#d6d6a0"></div><div style="left:623px;top:97px;width:1px;height:343.5px;background:#d6d6d6"></div><div style="left:623px;top:308.31px;width:1px;height:92.5px;background:#d6d6a0"></div><div style="left:685px;top:97px;width:1px;height:343.5px;background:#d6d6d6"></div><div style="left:685px;top:308.31px;width:1px;height:92.5px;background:#d6d6a0"></div><div style="left:713px;top:97px;width:1px;height:343.5px;background:#d6d6d6"></div><div style="left:713px;top:308.31px;width:1px;height:92.5px;background:#d6d6a0"></div><div style="left:749px;top:97px;width:1px;height:343.5px;background:#d6d6d6"></div><div style="left:749px;top:308.31px;width:1px;height:92.5px;background:#d6d6a0"></div><span class="t" style="left:26.50px;top:97.90px;font-size:8px;color:#4a4a4a;transform:scaleX(0.844);">Active</span><svg style="position:absolute;left:48px;top:99px" width="7" height="6" viewBox="0 0 7 6"><path d="M0.5 0.5 H6 L3.25 4.8 Z" fill="#2b7bd0"/></svg><span class="t" style="left:56.80px;top:97.90px;font-size:8px;color:#4a4a4a;transform:scaleX(0.844);">Screen Name</span><span class="t" style="left:137.80px;top:97.90px;font-size:8px;color:#4a4a4a;transform:scaleX(0.844);">Field</span><span class="t" style="left:218.00px;top:97.90px;font-size:8px;color:#4a4a4a;transform:scaleX(0.844);">Field Description</span><span class="t" style="left:400.00px;top:97.90px;font-size:8px;color:#4a4a4a;transform:scaleX(0.830);">Mapping Type</span><span class="t" style="left:453.40px;top:97.90px;font-size:8px;color:#4a4a4a;transform:scaleX(0.813);">Map Value</span><span class="t" style="left:530.00px;top:97.90px;font-size:8px;color:#4a4a4a;transform:scaleX(0.816);">Dynamic Skip</span><span class="t" style="left:626.00px;top:97.90px;font-size:8px;color:#4a4a4a;transform:scaleX(0.814);">Dynamic Formula</span><span class="t" style="left:688.40px;top:97.90px;font-size:8px;color:#4a4a4a;transform:scaleX(0.844);">Type</span><span class="t" style="left:716.00px;top:97.90px;font-size:8px;color:#4a4a4a;transform:scaleX(0.844);">Length</span><svg style="position:absolute;left:8px;top:98.5px" width="12" height="11" viewBox="0 0 12 11"><rect x="0.8" y="0.8" width="8.9" height="8.3" fill="#2a64ae"/><rect x="2.9" y="2.5" width="8" height="8.4" fill="#fff" stroke="#555" stroke-width="0.6"/><rect x="2.9" y="2.5" width="8" height="2.2" fill="#8c9c2c"/><rect x="2.9" y="2.5" width="2.2" height="8.4" fill="#8c9c2c"/><path d="M5.1 6.9H10.9M5.1 8.9H10.9" stroke="#555" stroke-width="0.6"/></svg><div style="left:5px;top:109px;width:18px;height:1px;background:#d6d6d6"></div><div style="left:5px;top:122px;width:18px;height:1.3px;background:#d0d0d0"></div><svg style="position:absolute;left:8.5px;top:113px" width="6" height="6" viewBox="0 0 6 6"><circle cx="3" cy="2.2" r="1.8" fill="#888"/><path d="M3 3.5 V6" stroke="#888" stroke-width="1"/></svg><svg style="position:absolute;left:35px;top:111.5px" width="9" height="9" viewBox="0 0 9 9"><rect x="0.5" y="0.5" width="8" height="8" fill="#fff" stroke="#b5b5b5" stroke-width="0.8"/><rect x="2.5" y="2.5" width="4" height="4" fill="#222"/></svg><svg style="position:absolute;left:10px;top:392px" width="4" height="5" viewBox="0 0 4 5"><path d="M0 0 L3.5 2.5 L0 5 Z" fill="#555"/></svg><div style="left:750px;top:97px;width:10px;height:12px;background:#f6f6f6"></div><div style="left:749px;top:109px;width:1px;height:1px;background:#d6d6d6"></div><div style="left:749.5px;top:110px;width:10.5px;height:336px;background:#ececec"></div><div style="left:749.5px;top:191.8px;width:10.5px;height:243.2px;background:#cdcdcd"></div><svg style="position:absolute;left:751px;top:113px" width="8" height="5" viewBox="0 0 8 5"><path d="M1 4 L4 1 L7 4" stroke="#555" stroke-width="1" fill="none"/></svg><div style="left:749.5px;top:435px;width:10.5px;height:11px;background:#ececec"></div><svg style="position:absolute;left:751px;top:439px" width="8" height="5" viewBox="0 0 8 5"><path d="M1 1 L4 4 L7 1" stroke="#555" stroke-width="1" fill="none"/></svg><svg style="position:absolute;left:8px;top:38.2px" width="19" height="19" viewBox="0 0 19 19"><circle cx="9.6" cy="9.4" r="9.4" fill="#3b74bb"/><path d="M6.5 4.6 L15.3 9.4 L6.5 14.2 Z" fill="#fff"/></svg><span class="t" style="left:11.25px;top:61.00px;font-size:8px;color:#444;transform:scaleX(0.851);">Run</span><svg style="position:absolute;left:35.5px;top:37.8px" width="11" height="11" viewBox="0 0 11 11"><circle cx="5.3" cy="5.3" r="5" fill="#a0a0a0"/><rect x="3" y="3" width="4.6" height="4.6" fill="#e0e0e0"/></svg><span class="t" style="left:49.00px;top:38.50px;font-size:8px;color:#a8a8a8;transform:scaleX(0.850);">Stop</span><svg style="position:absolute;left:35.5px;top:52px" width="12" height="12" viewBox="0 0 12 12"><circle cx="5.3" cy="5.3" r="5" fill="#3a9e6e"/><path d="M4 2.8 L8 5.3 L4 7.8 Z" fill="#fff"/><circle cx="8" cy="8" r="2.3" fill="#fff" stroke="#2c62b0" stroke-width="1"/><path d="M9.6 9.6 L11 11" stroke="#2c62b0" stroke-width="1"/></svg><span class="t" style="left:49.00px;top:52.80px;font-size:8px;color:#444;transform:scaleX(0.832);">Debug-All Screens</span><svg style="position:absolute;left:35.5px;top:66.4px" width="12" height="12" viewBox="0 0 12 12"><circle cx="5.3" cy="5.3" r="5" fill="#d9472b"/><path d="M4 2.8 L8 5.3 L4 7.8 Z" fill="#fff"/><path d="M5.5 8 L7.5 10.2 L11 6.5" stroke="#2fa84f" stroke-width="1.5" fill="none"/></svg><span class="t" style="left:49.00px;top:67.20px;font-size:8px;color:#444;transform:scaleX(0.823);">Test Run</span><svg style="position:absolute;left:83px;top:70.5px" width="4" height="3" viewBox="0 0 4 3"><path d="M0 0 H3.5 L1.75 2.2 Z" fill="#666"/></svg><svg style="position:absolute;left:112px;top:37.8px" width="12" height="12" viewBox="0 0 12 12"><circle cx="5.3" cy="5.3" r="5" fill="#3a9e6e"/><path d="M4 2.8 L8 5.3 L4 7.8 Z" fill="#fff"/><circle cx="8.3" cy="8.3" r="2.6" fill="#2c62b0"/><rect x="7" y="7.2" width="2.6" height="2.2" fill="#fff"/></svg><span class="t" style="left:125.00px;top:38.50px;font-size:8px;color:#444;transform:scaleX(0.822);">Error Processing</span><svg style="position:absolute;left:112px;top:52.2px" width="12" height="12" viewBox="0 0 12 12"><circle cx="5.3" cy="5.3" r="5" fill="#3a9e6e"/><path d="M4 2.8 L8 5.3 L4 7.8 Z" fill="#fff"/><circle cx="8.3" cy="8.3" r="2.4" fill="#e04030"/><rect x="7.2" y="7.8" width="2.2" height="1" fill="#fff"/></svg><span class="t" style="left:125.00px;top:53.00px;font-size:8px;color:#444;transform:scaleX(0.836);">Debug-Go to Error</span><svg style="position:absolute;left:112px;top:66.5px" width="12" height="12" viewBox="0 0 12 12"><circle cx="5.3" cy="5.3" r="5" fill="#b8b8b8"/><path d="M4 2.8 L8 5.3 L4 7.8 Z" fill="#eee"/><rect x="6.5" y="6.5" width="4.5" height="4.5" fill="#c8c8c8" stroke="#999" stroke-width="0.6"/></svg><span class="t" style="left:125.00px;top:67.30px;font-size:8px;color:#a8a8a8;transform:scaleX(0.845);">Data Governance</span><span class="t" style="left:75.60px;top:81.50px;font-size:8px;color:#555;transform:scaleX(0.852);">Run Actions</span><div style="left:187.5px;top:38px;width:1px;height:50px;background:#dcdcdc"></div><svg style="position:absolute;left:198px;top:37px" width="10" height="12" viewBox="0 0 10 12"><rect x="0.5" y="1.5" width="6" height="8" fill="#e0e0e0" stroke="#a8a8a8" stroke-width="0.7"/><rect x="3.5" y="4" width="6" height="7.5" fill="#f0f0f0" stroke="#a0a0a0" stroke-width="0.7"/><rect x="2" y="0.5" width="3" height="2" fill="#b0b0b0"/></svg><svg style="position:absolute;left:198px;top:52px" width="11" height="12" viewBox="0 0 11 12"><rect x="0.5" y="0.5" width="6" height="8" fill="#eee" stroke="#9a9a9a" stroke-width="0.7"/><rect x="3.5" y="3.5" width="6.5" height="8" fill="#fff" stroke="#2c62b0" stroke-width="0.8"/><path d="M5 6h3.5M5 8h3.5" stroke="#2c62b0" stroke-width="0.6"/></svg><svg style="position:absolute;left:198px;top:66.5px" width="11" height="12" viewBox="0 0 11 12"><path d="M3.8 7 L8.3 0.5 M7.2 7 L2.7 0.5" stroke="#444" stroke-width="1.3"/><ellipse cx="2.9" cy="8.8" rx="2.1" ry="1.7" fill="none" stroke="#2c6cc0" stroke-width="1.4"/><ellipse cx="8.1" cy="8.8" rx="2.1" ry="1.7" fill="none" stroke="#2c6cc0" stroke-width="1.4"/></svg><svg style="position:absolute;left:215.5px;top:42.3px" width="11" height="11" viewBox="0 0 11 11"><circle cx="5.3" cy="5.3" r="5.2" fill="#d9472b"/><rect x="2.3" y="4.4" width="6" height="1.9" fill="#fff"/></svg><svg style="position:absolute;left:215.5px;top:61px" width="11" height="11" viewBox="0 0 11 11"><rect x="0.5" y="0.5" width="6" height="7" fill="#fff" stroke="#2c62b0" stroke-width="0.8"/><rect x="2.5" y="2.5" width="8" height="8" fill="#f0c8c0" stroke="#d9472b" stroke-width="0.9"/><path d="M5 3v7M7.5 3v7" stroke="#d9472b" stroke-width="0.7"/></svg><span class="t" style="left:197.75px;top:81.50px;font-size:8px;color:#555;transform:scaleX(0.832);">Clipboard</span><div style="left:237px;top:38px;width:1px;height:50px;background:#dcdcdc"></div><div style="left:239px;top:35.5px;width:37px;height:43px;background:#b9d7f1"></div><svg style="position:absolute;left:247px;top:39px" width="20" height="17" viewBox="0 0 20 17"><rect x="0.5" y="0.5" width="18" height="15" fill="#fff" stroke="#6a6a6a" stroke-width="0.9"/><rect x="0.5" y="0.5" width="18" height="2.6" fill="#3d6fb5"/><path d="M0.5 6.8H18.5M0.5 10.5H18.5M6.5 3V15.5M12.5 3V15.5" stroke="#6a6a6a" stroke-width="0.8"/></svg><svg style="position:absolute;left:257px;top:48px" width="10" height="10" viewBox="0 0 10 10"><circle cx="5" cy="5" r="4.6" fill="#3a9e6e" stroke="#fff" stroke-width="0.6"/><path d="M2.7 5.1 L4.3 6.7 L7.3 3.5" stroke="#fff" stroke-width="1.2" fill="none"/></svg><span class="t" style="left:244.00px;top:60.80px;font-size:8px;color:#444;transform:scaleX(0.908);">Row(s)</span><span class="t" style="left:244.00px;top:68.60px;font-size:8px;color:#444;transform:scaleX(0.841);">Action</span><svg style="position:absolute;left:265.05px;top:72px" width="4" height="3" viewBox="0 0 4 3"><path d="M0 0 H3.5 L1.75 2 Z" fill="#777"/></svg><svg style="position:absolute;left:282.5px;top:39px" width="20" height="18" viewBox="0 0 20 18"><rect x="0.5" y="0.5" width="17" height="14" fill="#f4f4f4" stroke="#999" stroke-width="0.8"/><rect x="0.5" y="0.5" width="17" height="2.4" fill="#bbb"/><path d="M0.5 6.5H17.5M0.5 10H17.5M6 3V14.5M11.5 3V14.5" stroke="#bbb" stroke-width="0.7"/><path d="M6 11.5 H13" stroke="#3a9e6e" stroke-width="1.8"/><path d="M4.3 11.5 L8 8.3 V14.7 Z" fill="#3a9e6e"/><path d="M10 14.5 H17" stroke="#2c62b0" stroke-width="1.8"/><path d="M19.5 14.5 L15.8 11.3 V17.7 Z" fill="#2c62b0"/></svg><span class="t" style="left:278.00px;top:60.80px;font-size:8px;color:#444;transform:scaleX(0.840);">Fast Map</span><svg style="position:absolute;left:290.45px;top:72px" width="4" height="3" viewBox="0 0 4 3"><path d="M0 0 H3.5 L1.75 2 Z" fill="#777"/></svg><svg style="position:absolute;left:318.5px;top:39px" width="20" height="18" viewBox="0 0 20 18"><rect x="0.5" y="0.5" width="18.5" height="15.5" fill="#fff" stroke="#888" stroke-width="0.8"/><rect x="0.5" y="0.5" width="18.5" height="2.6" fill="#3d6fb5"/><rect x="9" y="6" width="8" height="5" fill="#d8d8d8"/><rect x="1" y="10" width="5" height="6" fill="#cfe3f5"/><path d="M1 7 H8 M5.5 4.5 L8 7 L5.5 9.5" stroke="#3a9e6e" stroke-width="1.6" fill="none"/></svg><span class="t" style="left:318.20px;top:60.80px;font-size:8px;color:#444;transform:scaleX(0.889);">Other</span><span class="t" style="left:314.50px;top:68.60px;font-size:8px;color:#444;transform:scaleX(0.832);">Action</span><svg style="position:absolute;left:335.65px;top:72px" width="4" height="3" viewBox="0 0 4 3"><path d="M0 0 H3.5 L1.75 2 Z" fill="#777"/></svg><div style="left:347.5px;top:38px;width:1px;height:50px;background:#dcdcdc"></div><svg style="position:absolute;left:355px;top:39px" width="20" height="19" viewBox="0 0 20 19"><rect x="0.5" y="0.5" width="18" height="17" fill="#fff" stroke="#7a7a7a" stroke-width="0.9"/><rect x="0.5" y="0.5" width="10" height="3" fill="#3d6fb5"/><rect x="10.5" y="0.5" width="8" height="3" fill="#c8c8c8"/><path d="M3 7.5H16M3 10H16M3 12.5H16" stroke="#9a9a9a" stroke-width="0.9"/></svg><span class="t" style="left:354.30px;top:60.80px;font-size:8px;color:#444;transform:scaleX(0.777);">Simple</span><span class="t" style="left:356.80px;top:68.60px;font-size:8px;color:#444;transform:scaleX(0.814);">View</span><div style="left:377px;top:35px;width:41px;height:44.5px;background:#b9d7f1"></div><svg style="position:absolute;left:388px;top:39px" width="20" height="19" viewBox="0 0 20 19"><rect x="0.5" y="0.5" width="18" height="17" fill="#fff" stroke="#7a7a7a" stroke-width="0.9"/><rect x="0.5" y="0.5" width="10" height="3" fill="#3d6fb5"/><rect x="10.5" y="0.5" width="8" height="3" fill="#c8c8c8"/><path d="M3 7.5H16M3 10H16M3 12.5H16" stroke="#9a9a9a" stroke-width="0.9"/></svg><span class="t" style="left:382.80px;top:60.80px;font-size:8px;color:#444;transform:scaleX(0.815);">Advanced</span><span class="t" style="left:390.30px;top:68.60px;font-size:8px;color:#444;transform:scaleX(0.814);">View</span><div style="left:421px;top:36px;width:58px;height:13.6px;background:#b9d7f1"></div><svg style="position:absolute;left:424.3px;top:37.5px" width="12" height="12" viewBox="0 0 12 12"><rect x="0.5" y="0.5" width="8" height="9.5" fill="#fff" stroke="#666" stroke-width="0.8"/><rect x="0.5" y="0.5" width="8" height="1.8" fill="#3d6fb5"/><rect x="3" y="2.3" width="2.6" height="7.7" fill="#d5e5f5"/><path d="M0.5 4.7H8.5M0.5 7.3H8.5M3 2.3V10M5.6 2.3V10" stroke="#888" stroke-width="0.6"/><circle cx="8" cy="7.3" r="3.1" fill="#3a9e6e" stroke="#fff" stroke-width="0.5"/><path d="M6.5 7.4 L7.6 8.5 L9.5 6.4" stroke="#fff" stroke-width="0.9" fill="none"/></svg><span class="t" style="left:438.00px;top:38.50px;font-size:8px;color:#444;transform:scaleX(0.832);">Active Rows</span><svg style="position:absolute;left:424.3px;top:52px" width="12" height="12" viewBox="0 0 12 12"><rect x="0.5" y="0.5" width="8" height="9.5" fill="#fff" stroke="#666" stroke-width="0.8"/><rect x="0.5" y="0.5" width="8" height="1.8" fill="#3d6fb5"/><rect x="3" y="2.3" width="2.6" height="7.7" fill="#d5e5f5"/><path d="M0.5 4.7H8.5M0.5 7.3H8.5M3 2.3V10M5.6 2.3V10" stroke="#888" stroke-width="0.6"/><circle cx="8" cy="7.3" r="3.1" fill="#d9472b" stroke="#fff" stroke-width="0.5"/><path d="M6.8 6.1 L9.2 8.5 M9.2 6.1 L6.8 8.5" stroke="#fff" stroke-width="0.8"/></svg><span class="t" style="left:438.00px;top:53.00px;font-size:8px;color:#444;transform:scaleX(0.849);">Inactive Rows</span><svg style="position:absolute;left:424.3px;top:66.5px" width="12" height="12" viewBox="0 0 12 12"><rect x="0.5" y="0.5" width="9.5" height="9.5" fill="#fff" stroke="#666" stroke-width="0.8"/><rect x="0.5" y="0.5" width="9.5" height="1.8" fill="#3d6fb5"/><path d="M0.5 4.7H10M0.5 7.3H10M3.7 2.3V10M6.9 2.3V10" stroke="#888" stroke-width="0.6"/></svg><span class="t" style="left:438.00px;top:67.10px;font-size:8px;color:#444;transform:scaleX(0.787);">All Rows</span><span class="t" style="left:423.80px;top:81.50px;font-size:8px;color:#555;transform:scaleX(0.799);">Show</span><svg style="position:absolute;left:491.5px;top:37.8px" width="20" height="21" viewBox="0 0 20 21"><path d="M0.5 0.5 H11 L15 4.5 V19.5 H0.5 Z" fill="#fff" stroke="#777" stroke-width="0.8"/><path d="M11 0.5 V4.5 H15" fill="none" stroke="#777" stroke-width="0.7"/><rect x="2.5" y="6" width="10" height="1.6" fill="#3d6fb5"/><path d="M2.5 9.5H9M2.5 12H8M2.5 14.5H8" stroke="#aaa" stroke-width="0.8"/><circle cx="11.6" cy="12.9" r="4.4" fill="#fff" fill-opacity="0.85" stroke="#333" stroke-width="1.4"/><path d="M14.8 16.1 L18 19.3" stroke="#333" stroke-width="1.9"/></svg><span class="t" style="left:491.00px;top:60.80px;font-size:8px;color:#444;transform:scaleX(0.818);">Excel</span><span class="t" style="left:489.50px;top:68.60px;font-size:8px;color:#444;transform:scaleX(0.814);">View</span><svg style="position:absolute;left:505.25px;top:72px" width="4" height="3" viewBox="0 0 4 3"><path d="M0 0 H3.5 L1.75 2 Z" fill="#777"/></svg><div style="left:517px;top:38px;width:1px;height:50px;background:#dcdcdc"></div><svg style="position:absolute;left:751.5px;top:82.5px" width="6" height="5" viewBox="0 0 6 5"><path d="M0.7 4 L3 1.5 L5.3 4" stroke="#555" stroke-width="1.4" fill="none"/></svg><svg style="position:absolute;left:4px;top:4.3px" width="12" height="12" viewBox="0 0 12 12"><circle cx="5.8" cy="5.8" r="4.8" fill="none" stroke="#a04fd0" stroke-width="1.3" stroke-dasharray="7.5 0"/><path d="M5.8 1 A4.8 4.8 0 0 1 10.6 5.8" stroke="#3aa857" stroke-width="1.3" fill="none"/><path d="M10.6 5.8 A4.8 4.8 0 0 1 5.8 10.6" stroke="#e07c3a" stroke-width="1.3" fill="none"/><path d="M5.8 10.6 A4.8 4.8 0 0 1 1 5.8" stroke="#3d7ac6" stroke-width="1.3" fill="none"/><path d="M6.5 2.5 L4.5 8 L7.5 8.5 Z" fill="#5aaa3a"/><path d="M3.5 8.5 H8" stroke="#2c62b0" stroke-width="1"/></svg><svg style="position:absolute;left:21.5px;top:4.5px" width="10" height="11" viewBox="0 0 10 11"><path d="M0.5 0.5 H6.5 L9.5 3.5 V10.5 H0.5 Z" fill="#fff" stroke="#888" stroke-width="0.8"/><path d="M5 3 L3.5 8 L6 8.3 Z" fill="#5aaa3a"/><path d="M3 8.5H6.5" stroke="#2c62b0" stroke-width="0.9"/><path d="M0.5 0.5 H3" stroke="#e8a080" stroke-width="1"/></svg><svg style="position:absolute;left:39.8px;top:5.1px" width="10" height="10" viewBox="0 0 10 10"><rect x="0.7" y="0.7" width="8.6" height="8.8" fill="#fff" stroke="#9a4fc0" stroke-width="1.1" rx="0.6"/><rect x="2.2" y="1.8" width="5.6" height="3.4" fill="#dcdcdc"/><rect x="1" y="6.8" width="8" height="2.5" fill="#9a4fc0"/><rect x="3.6" y="7.2" width="1.6" height="2.2" fill="#fff"/></svg><svg style="position:absolute;left:57.2px;top:5.1px" width="11" height="11" viewBox="0 0 11 11"><rect x="0.7" y="0.7" width="8.6" height="8.8" fill="#fff" stroke="#9a4fc0" stroke-width="1.1" rx="0.6"/><rect x="2.2" y="1.8" width="5.6" height="3.4" fill="#dcdcdc"/><rect x="1" y="6.8" width="8" height="2.5" fill="#9a4fc0"/><rect x="3.6" y="7.2" width="1.6" height="2.2" fill="#fff"/><path d="M5.3 6.5 H10.3 V7.8 A2.5 2.3 0 0 1 5.3 7.8 Z" fill="#f0a838"/><ellipse cx="7.8" cy="6.6" rx="2.5" ry="0.9" fill="#f8c870"/></svg><svg style="position:absolute;left:74.5px;top:4.5px" width="11" height="11" viewBox="0 0 11 11"><path d="M0.5 0.5 H5.5 L8 3 V10.5 H0.5 Z" fill="#fff" stroke="#888" stroke-width="0.8"/><path d="M4 3 L2.5 8 L5 8.3 Z" fill="#5aaa3a"/><circle cx="7.8" cy="8" r="2.8" fill="#d9472b"/><path d="M6.6 6.8 L9 9.2 M9 6.8 L6.6 9.2" stroke="#fff" stroke-width="0.8"/></svg><svg style="position:absolute;left:92px;top:4.5px" width="11" height="11" viewBox="0 0 11 11"><circle cx="5.3" cy="5.3" r="5.1" fill="#3b78c3"/><path d="M4 2.8 L8 5.3 L4 7.8 Z" fill="#fff"/></svg><svg style="position:absolute;left:109px;top:9.3px" width="4" height="3" viewBox="0 0 4 3"><path d="M0 0 H3.5 L1.75 2.2 Z" fill="#888"/></svg><svg style="position:absolute;left:119px;top:4.5px" width="11" height="11" viewBox="0 0 11 11"><circle cx="5.2" cy="5.2" r="5" fill="#a6a6a6"/><rect x="3" y="3" width="4.4" height="4.4" fill="#e6e6e6"/></svg><svg style="position:absolute;left:136.5px;top:5px" width="11" height="10" viewBox="0 0 11 10"><rect x="0.5" y="0.5" width="10" height="9" fill="#fff" stroke="#666" stroke-width="0.9"/><rect x="0.5" y="0.5" width="5" height="2" fill="#3d6fb5"/><rect x="5.5" y="0.5" width="5" height="2" fill="#aaa"/></svg><svg style="position:absolute;left:151px;top:9.3px" width="4" height="3" viewBox="0 0 4 3"><path d="M0 0 H3.5 L1.75 2.2 Z" fill="#888"/></svg><svg style="position:absolute;left:167px;top:8px" width="4" height="5" viewBox="0 0 4 5"><path d="M0.3 0.5 H3.7" stroke="#888" stroke-width="0.7"/><path d="M0 2 H3.5 L1.75 4.2 Z" fill="#888"/></svg><svg style="position:absolute;left:564.5px;top:453.8px" width="12" height="12" viewBox="0 0 12 12"><path d="M0.8 2.2 V9.3 A4.2 1.6 0 0 0 9.2 9.3 V2.2 Z" fill="#f2b84e"/><ellipse cx="5" cy="2.2" rx="4.2" ry="1.6" fill="#f6cd72"/><path d="M0.8 4.3 A4.2 1.6 0 0 0 9.2 4.3" stroke="#c98d2a" stroke-width="0.6" fill="none"/><rect x="6" y="6.3" width="4.6" height="4.6" fill="#3b7dd0"/></svg><span class="t" style="left:578.20px;top:455.20px;font-size:8px;color:#e8eef8;transform:scaleX(0.788);">EShare OFF</span><span class="t" style="left:621.70px;top:455.20px;font-size:8px;color:#e8eef8;transform:scaleX(0.824);">License Server ON</span><div style="left:685px;top:456.5px;width:39px;height:6px;background:#4b70a8;border-radius:3px;filter:blur(1.5px)"></div><svg style="position:absolute;left:758px;top:461.5px" width="6" height="6" viewBox="0 0 6 6"><g fill="#b8c8e4"><rect x="4.5" y="0.5" width="1.3" height="1.3"/><rect x="2.6" y="2.4" width="1.3" height="1.3"/><rect x="4.5" y="2.4" width="1.3" height="1.3"/><rect x="0.6" y="4.3" width="1.3" height="1.3"/><rect x="2.6" y="4.3" width="1.3" height="1.3"/><rect x="4.5" y="4.3" width="1.3" height="1.3"/></g></svg><div style="left:24px;top:387.6px;width:30px;height:13.215px;background:#ffffb4;border:1px dashed #9a9a80"></div><svg style="position:absolute;left:35px;top:389.9075px" width="9" height="9" viewBox="0 0 9 9"><rect x="0.5" y="0.5" width="8" height="8" fill="#fff9aa" stroke="#bdbb8e" stroke-width="0.8"/><path d="M2 4.6 L3.7 6.4 L7.2 2.6" stroke="#2a2a2a" stroke-width="1.2" fill="none"/></svg><div style="left:22px;top:308px;width:727.5px;height:94.8px;border:2px solid #f0191e"></div><div style="left:239px;top:35.5px;width:36.5px;height:43.3px;border:1.6px solid #f0191e;border-bottom:none"></div><div style="left:239px;top:77.2px;width:102px;height:50px;border:1.6px solid #f0191e;background:#fff"></div><div style="left:240.6px;top:77px;width:33.3px;height:1.8px;background:#b9d7f1"></div><svg style="position:absolute;left:244px;top:82px" width="12" height="11" viewBox="0 0 12 11"><rect x="0.5" y="0.5" width="10" height="10" fill="#fff" stroke="#555" stroke-width="0.8"/><rect x="0.5" y="0.5" width="10" height="2" fill="#3d6fb5"/><path d="M0.5 4.5H10.5M0.5 7.5H10.5M3.8 2.5V10.5M7.2 2.5V10.5" stroke="#777" stroke-width="0.6"/><rect x="4" y="2.6" width="3" height="7.8" fill="#cfe3f5" opacity="0.7"/></svg><span class="t" style="left:262.20px;top:82.70px;font-size:8px;color:#333;transform:scaleX(0.901);">Select All Rows</span><svg style="position:absolute;left:244.5px;top:97.5px" width="11" height="11" viewBox="0 0 11 11"><circle cx="5.2" cy="5.2" r="5" fill="#3a9e6e"/><path d="M2.6 5.3 L4.5 7.1 L7.8 3.5" stroke="#fff" stroke-width="1.4" fill="none"/></svg><span class="t" style="left:262.20px;top:98.00px;font-size:8px;color:#333;transform:scaleX(0.925);">Activate Row(s)</span><div style="left:241.8px;top:110.3px;width:96.5px;height:15px;background:#cadf9f;border:1px solid #f0191e"></div><svg style="position:absolute;left:244.5px;top:112.5px" width="12" height="11" viewBox="0 0 12 11"><circle cx="5.2" cy="5.2" r="5" fill="#8a8a60"/><path d="M2.6 5.3 L4.5 7.1 L7.8 3.5" stroke="#e8e0a0" stroke-width="1.4" fill="none"/><path d="M6.8 6.8 L10.4 10.4 M10.4 6.8 L6.8 10.4" stroke="#e03020" stroke-width="1.2"/></svg><span class="t" style="left:262.20px;top:112.90px;font-size:8px;color:#333;transform:scaleX(0.903);">Deactivate Row(s)</span><div style="left:376.8px;top:35.2px;width:41.4px;height:44.8px;border:2.2px solid #f0191e"></div><svg style="position:absolute;left:318px;top:248px" width="190" height="62" viewBox="0 0 190 62"><path d="M2 2 H188 V34.6 H60.3 L1.6 60.5 L39.6 34.6 H2 Z" fill="#16b6f0" stroke="#106e98" stroke-width="1.4" stroke-linejoin="miter"/></svg><span class="t" style="left:327.30px;top:256.81px;font-size:8.5px;color:#fff;font-weight:bold;transform:scaleX(1.078);">These are the fields that were repeated</span><span class="t" style="left:327.30px;top:268.31px;font-size:8.5px;color:#fff;font-weight:bold;transform:scaleX(1.060);">while recording for second line item.</span><svg style="position:absolute;left:371.9px;top:29.700000000000003px" width="13" height="13" viewBox="0 0 13 13"><circle cx="6.5" cy="6.5" r="6.1" fill="#fff" opacity="0.85"/><circle cx="6.5" cy="6.5" r="5.3" fill="#0a14ee"/><text x="6.5" y="9.9" font-family="Liberation Sans" font-size="9.5" fill="#fff" text-anchor="middle">1</text></svg><svg style="position:absolute;left:15.2px;top:302.9px" width="13" height="13" viewBox="0 0 13 13"><circle cx="6.5" cy="6.5" r="6.1" fill="#fff" opacity="0.85"/><circle cx="6.5" cy="6.5" r="5.3" fill="#0a14ee"/><text x="6.5" y="9.9" font-family="Liberation Sans" font-size="9.5" fill="#fff" text-anchor="middle">2</text></svg><svg style="position:absolute;left:235.7px;top:104.7px" width="13" height="13" viewBox="0 0 13 13"><circle cx="6.5" cy="6.5" r="6.1" fill="#fff" opacity="0.85"/><circle cx="6.5" cy="6.5" r="5.3" fill="#0a14ee"/><text x="6.5" y="9.9" font-family="Liberation Sans" font-size="9.5" fill="#fff" text-anchor="middle">3</text></svg>
</body></html>
